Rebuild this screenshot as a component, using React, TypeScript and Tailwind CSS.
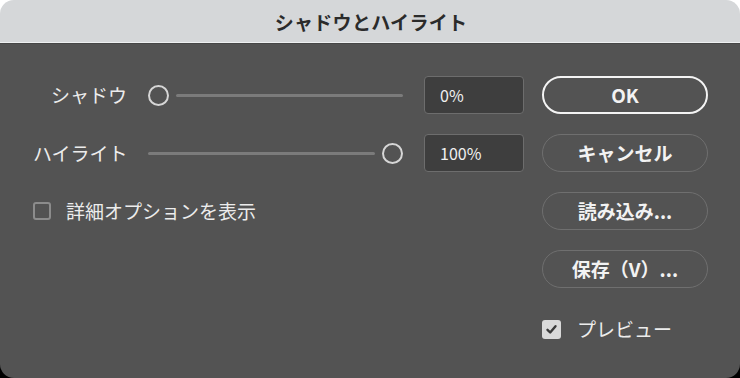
import React from "react";

const FONT = "font-['Noto_Sans_CJK_JP','Noto_Sans',sans-serif]";

function Slider({ thumbAt }: { thumbAt: "start" | "end" }) {
  const thumb = <div className="w-[21px] h-[21px] shrink-0 rounded-full border-2 border-[#d6d6d6]" />;
  const track = <div className="flex-1 h-[3px] rounded-full bg-[#7b7b7b]" />;
  return (
    <div className="w-[255px] flex items-center gap-[7px]">
      {thumbAt === "start" ? thumb : track}
      {thumbAt === "start" ? track : thumb}
    </div>
  );
}

function NumBox({ value }: { value: string }) {
  return (
    <div className="w-[100px] h-[38px] flex items-center px-[15px] rounded-[4px] border border-[#6d6d6d] bg-[#3e3e3e] text-[16px] text-[#f0f0f0]">
      {value}
    </div>
  );
}

function Btn({ label, primary }: { label: string; primary?: boolean }) {
  return (
    <button
      className={`w-[166px] h-[38px] rounded-full flex items-center justify-center text-[19px] font-bold text-[#f2f2f2] ${
        primary ? "border-2 border-[#f4f4f4]" : "border border-[#6f6f6f]"
      }`}
    >
      {label}
    </button>
  );
}

export default function App() {
  return (
    <div className={`w-[740px] h-[378px] bg-[linear-gradient(to_bottom,#ffffff_50%,#000000_50%)] ${FONT}`}>
      <div className="w-full h-full flex flex-col rounded-[14px] overflow-hidden">
        {/* title bar */}
        <div className="h-[43px] shrink-0 flex items-center justify-center pt-[3px] bg-[#d5d7d9] border-b border-[#eef0f1]">
          <span className="text-[19px] font-bold tracking-[0.3px] text-[#2b2b2b] pl-[2px]">シャドウとハイライト</span>
        </div>

        <div className="flex-1 flex bg-[#535353] border-t border-[#464646] pt-[32px] pl-[33px]">
          {/* left controls */}
          <div className="flex flex-col gap-[20px]">
            <div className="h-[38px] flex items-center">
              <span className="w-[94px] text-right text-[19px] text-[#ececec] whitespace-nowrap">シャドウ</span>
              <div className="ml-[21px]">
                <Slider thumbAt="start" />
              </div>
              <div className="ml-[21px]">
                <NumBox value="0%" />
              </div>
            </div>
            <div className="h-[38px] flex items-center">
              <span className="w-[94px] text-right text-[19px] text-[#ececec] whitespace-nowrap">ハイライト</span>
              <div className="ml-[21px]">
                <Slider thumbAt="end" />
              </div>
              <div className="ml-[21px]">
                <NumBox value="100%" />
              </div>
            </div>
            <div className="h-[38px] flex items-center">
              <div className="w-[18px] h-[18px] rounded-[3px] border-2 border-[#8c8c8c]" />
              <span className="ml-[15px] text-[19px] text-[#ececec]">詳細オプションを表示</span>
            </div>
          </div>

          {/* right buttons */}
          <div className="ml-[18px] flex flex-col">
            <div className="flex flex-col gap-[20px]">
              <Btn label="OK" primary />
              <Btn label="キャンセル" />
              <Btn label="読み込み..." />
              <Btn label="保存（V）..." />
            </div>
            <div className="mt-[27px] flex items-center">
              <div className="w-[19px] h-[19px] rounded-[3px] bg-[#d9d9d9] flex items-center justify-center">
                <svg width="13" height="13" viewBox="0 0 13 13">
                  <path d="M2.5 6.8 L5.2 9.5 L10.5 3.2" fill="none" stroke="#3a3a3a" strokeWidth="2.4" strokeLinecap="round" strokeLinejoin="round" />
                </svg>
              </div>
              <span className="ml-[16px] text-[19px] text-[#ececec]">プレビュー</span>
            </div>
          </div>
        </div>
      </div>
    </div>
  );
}
